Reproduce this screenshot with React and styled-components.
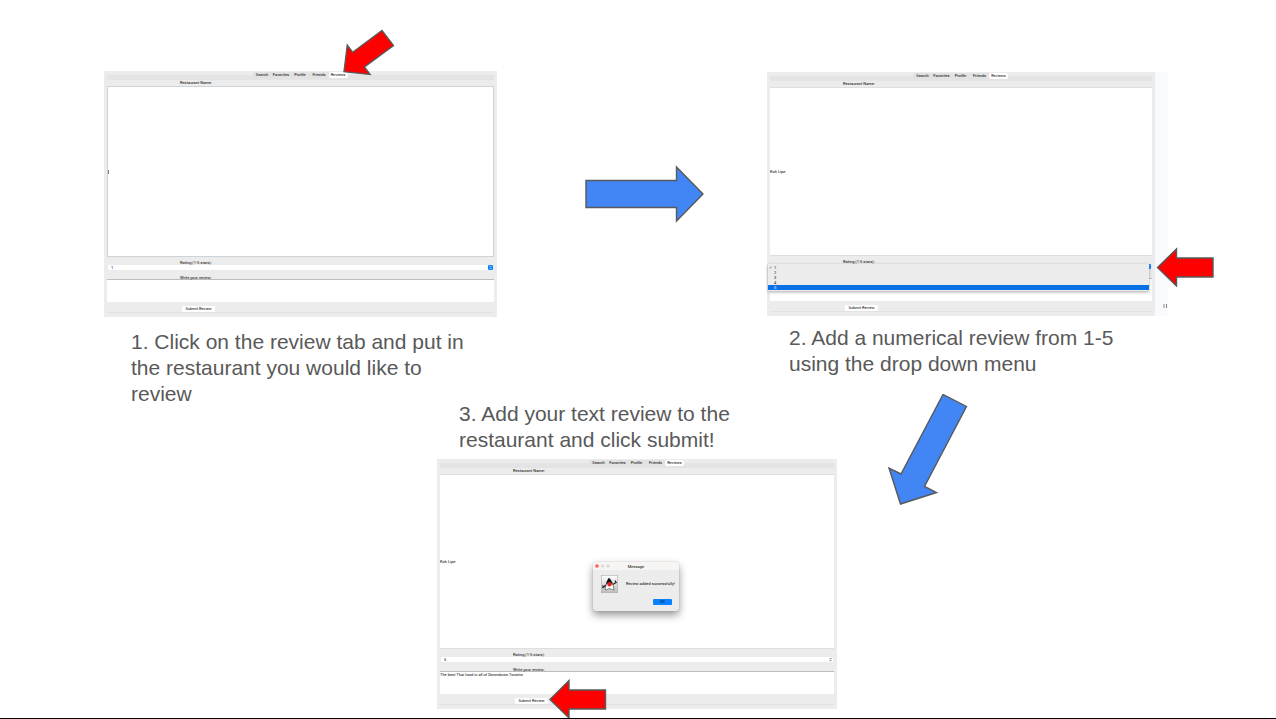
import React, { useId } from "react";
import styled, { createGlobalStyle } from "styled-components";

const GlobalStyle = createGlobalStyle`
  *, *::before, *::after { box-sizing: border-box; }
  body { margin: 0; background: #fff; font-family: "Liberation Sans", Arial, sans-serif; }
  button, input, select, textarea { font: inherit; color: inherit; margin: 0; padding: 0; border: 0; outline: 0; border-radius: 0; }
`;

const Slide = styled.main`
  display: grid;
  grid-template-columns: 104fr 333fr 60fr 270fr 70fr 331fr 108fr;
  grid-template-rows: auto auto;
  align-items: start;
  min-height: 100vh;
  padding: 71px 0 9px;
  border-bottom: 1px solid #000;
  overflow: hidden;
`;

const Step = styled.section`
  grid-column: ${(p) => p.$cols};
  grid-row: ${(p) => p.$rows};
  padding: ${(p) => p.$pad || "0"};
  min-width: 0;
`;

const Caption = styled.p`
  margin: ${(p) => p.$margin};
  max-width: 345px;
  font-size: 21px;
  line-height: 26px;
  color: #595959;
`;

const Shot = styled.div`
  position: relative;
  display: flex;
  background: #f9fafd;
  padding-right: ${(p) => p.$strip}px;
`;

const Window = styled.form`
  flex: 1;
  min-width: 0;
  padding: 0 3px 4px;
  background: #ececec;
  font-family: Roboto, "Liberation Sans", sans-serif;
  font-size: 4px;
  line-height: 5px;
  color: #000;
`;

const Header = styled.div`
  display: flex;
  justify-content: center;
  padding: 1px 1px 0 0;
  height: 9px;
  background: linear-gradient(#ececec 4px, #e4e4e4 4px);
`;

const TabGroup = styled.div`
  display: flex;
  height: 6px;
  border-radius: 2px;
  background: #e2e2e2;
`;

const Tab = styled.button`
  width: 19px;
  height: 6px;
  line-height: 6px;
  text-align: center;
  white-space: nowrap;
  border-radius: 2px;
  color: #000;
  background: ${(p) => (p.$active ? "#fff" : "transparent")};
`;

const Label = styled.label`
  display: block;
  height: ${(p) => p.$height}px;
  line-height: 6px;
  padding-top: ${(p) => p.$drop || 0}px;
  padding-left: 73px;
`;

const NameInput = styled.input`
  display: block;
  width: 100%;
  height: ${(p) => p.$height}px;
  border: solid ${(p) => (p.$caret ? "#ccd3d9" : "#dedede")};
  border-width: ${(p) => (p.$caret ? "1px" : "1px 0")};
  background: ${(p) =>
    p.$caret ? "linear-gradient(#777, #777) 0 50% / 1px 4px no-repeat #fff" : "#fff"};
`;

const SelectRow = styled.div`
  position: relative;
  display: flex;
  height: 5px;
  padding: 0 1px;
`;

const RatingSelect = styled.select`
  appearance: none;
  flex: 1;
  height: 5px;
  padding-left: 3px;
  line-height: 5px;
  border-radius: 1px;
  background: #fff;
`;

const Stepper = styled.svg`
  position: absolute;
  right: 1px;
  top: 0;
  width: 5px;
  height: 5px;
`;

const ReviewText = styled.textarea`
  display: block;
  width: 100%;
  height: 23px;
  resize: none;
  overflow: hidden;
  border-top: 1px solid #bdbdbd;
  background: #fff;
`;

const Footer = styled.div`
  height: 11px;
  padding: 4px 0 0 75px;
  border-bottom: 1px solid #e2e2e2;
`;

const SubmitButton = styled.button`
  display: block;
  width: 33px;
  height: 6px;
  line-height: 6px;
  border-radius: 1px;
  background: #fff;
  color: #000;
`;

const Menu = styled.ul`
  position: absolute;
  top: 192px;
  left: 1px;
  right: 19px;
  margin: 0;
  padding: 1px 0;
  list-style: none;
  font-family: Roboto, "Liberation Sans", sans-serif;
  font-size: 4px;
  background: #ececec;
  box-shadow: 0 1px 3px rgba(0, 0, 0, 0.35);
`;

const MenuItem = styled.li`
  display: flex;
  height: 5px;
  line-height: 5px;
  color: ${(p) => (p.$active ? "#fff" : "#111")};
  background: ${(p) => (p.$active ? "#0a70e8" : "transparent")};
`;

const Check = styled.span`
  width: 6px;
  padding-left: 1px;
`;

const PauseMark = styled.svg`
  position: absolute;
  right: 0;
  bottom: 8px;
  width: 5px;
  height: 4px;
`;

const Dialog = styled.div`
  position: absolute;
  left: 39%;
  top: 103px;
  width: 86px;
  height: 49px;
  border-radius: 3px;
  background: #ececec;
  box-shadow: 0 4px 9px rgba(0, 0, 0, 0.42), 0 0 1px rgba(0, 0, 0, 0.35);
  font-family: Roboto, "Liberation Sans", sans-serif;
  font-size: 4px;
  color: #000;
`;

const DialogTitle = styled.div`
  display: grid;
  grid-template-columns: 20px 1fr 20px;
  align-items: center;
  height: 8px;
  border-radius: 3px 3px 0 0;
  background: #f6f5f3;
  text-align: center;
`;

const DialogBody = styled.div`
  display: flex;
  gap: 8px;
  padding: 5px 0 0 8px;
  line-height: 18px;
  white-space: nowrap;

  svg { flex: none; }
`;

const OkButton = styled.button`
  display: block;
  width: 19px;
  height: 6px;
  margin: 6px 7px 0 auto;
  line-height: 6px;
  border-radius: 1px;
  background: #0a82ff;
  color: #06264d;
`;

const Arrow = styled.svg`
  display: block;
  fill: ${(p) => (p.$red ? "#f00" : "#4285f4")};
  stroke: #595959;
  stroke-width: 1.4;
`;

const Pointer = styled(Arrow)`
  position: absolute;
  z-index: 2;
  left: ${(p) => p.$left};
  top: ${(p) => p.$top};
`;

const Link = styled.div`
  grid-column: ${(p) => p.$cols};
  grid-row: ${(p) => p.$row};
  padding: ${(p) => p.$pad};
`;

const TABS = ["Search", "Favorites", "Profile", "Friends", "Reviews"];
const RATINGS = ["1", "2", "3", "4", "5"];

function ReviewWindow({ boxHeight, name = "", rating = "1", review = "", caret, blue }) {
  const id = useId();
  return (
    <Window onSubmit={(e) => e.preventDefault()}>
      <Header>
        <TabGroup role="tablist">
          {TABS.map((t) => (
            <Tab key={t} type="button" role="tab" aria-selected={t === "Reviews"} $active={t === "Reviews"}>
              {t}
            </Tab>
          ))}
        </TabGroup>
      </Header>
      <Label htmlFor={id + "n"} $height={6}>Restaurant Name:</Label>
      <NameInput id={id + "n"} defaultValue={name} $height={boxHeight} $caret={caret} />
      <Label htmlFor={id + "r"} $height={8} $drop={3}>Rating (1-5 stars):</Label>
      <SelectRow>
        <RatingSelect id={id + "r"} defaultValue={rating}>
          {RATINGS.map((r) => <option key={r}>{r}</option>)}
        </RatingSelect>
        <Stepper viewBox="0 0 5 5" aria-hidden="true">
          {blue && <rect width="5" height="5" rx="1" fill="#0a82ff" />}
          <path d="M1.5 2 2.5 1 3.5 2M1.5 3 2.5 4 3.5 3" fill="none" stroke={blue ? "#fff" : "#333"} strokeWidth=".6" />
        </Stepper>
      </SelectRow>
      <Label htmlFor={id + "t"} $height={9} $drop={5}>Write your review:</Label>
      <ReviewText id={id + "t"} defaultValue={review} />
      <Footer>
        <SubmitButton type="submit">Submit Review</SubmitButton>
      </Footer>
    </Window>
  );
}

function Duke() {
  return (
    <svg width="17" height="18" viewBox="0 0 17 18" aria-hidden="true">
      <defs>
        <linearGradient id="tile" x1="0" y1="0" x2="0" y2="1">
          <stop offset="0" stopColor="#fff" />
          <stop offset="1" stopColor="#bdbdbd" />
        </linearGradient>
      </defs>
      <rect x=".3" y=".3" width="16.4" height="17.4" fill="url(#tile)" stroke="#aaa" strokeWidth=".6" />
      <path d="M8 3C6.500 5 5 9 4 14.500C6 15.500 7 13.500 8.500 13.500S11 15.500 13 14.500C12 9 10.500 5 8 3Z" fill="#fff" stroke="#333" strokeWidth=".6" />
      <path d="M8 3C6.800 4.500 5.500 7 5.200 8.800L11.500 8.800C10.500 6 9.500 4.500 8 3Z" fill="#111" />
      <path d="M4.800 10 1.500 13M1.500 10.500 3 12.500M11.800 9.500 15 7.500M14 5.500 15.500 8" fill="none" stroke="#222" strokeWidth="1.200" />
      <circle cx="8.500" cy="9.300" r="2.200" fill="#e6231f" />
    </svg>
  );
}

export default function App() {
  return (
    <>
      <GlobalStyle />
      <Slide>
        <Step $cols="2 / 4" $rows="1 / 3">
          <Shot $strip={0}>
            <ReviewWindow boxHeight={171} caret blue />
            <Pointer $red $left="60.5%" $top="-42px" width="53" height="48" viewBox="343 29 53 48" aria-hidden="true">
              <path d="M345 71.700 348.300 45 353.700 52.300 383 30.500 394.500 45.500 365.500 67 371 74.500Z" />
            </Pointer>
          </Shot>
          <Caption $margin="12px 0 0 27px">1. Click on the review tab and put in the restaurant you would like to review</Caption>
        </Step>

        <Link $cols="4" $row="1" $pad="94px 0 0 87px">
          <Arrow width="120" height="58" viewBox="584 165 120 58" aria-hidden="true">
            <path d="M586 180.500H676.500V167L703 194 676.500 221V207.500H586Z" />
          </Arrow>
        </Link>

        <Step $cols="5 / 7" $rows="1" $pad="1px 0 17px">
          <Shot $strip={13}>
            <ReviewWindow boxHeight={169} name="Koh Lipe" blue />
            <Menu>
              {RATINGS.map((r) => (
                <MenuItem key={r} $active={r === "5"}>
                  <Check>{r === "1" ? "✓" : ""}</Check>
                  {r}
                </MenuItem>
              ))}
            </Menu>
            <PauseMark viewBox="0 0 5 4" aria-hidden="true">
              <path d="M1 0V4M3.500 0V4" stroke="#888" />
            </PauseMark>
            <Pointer $red $left="97%" $top="175px" width="59" height="40" viewBox="1156 247 59 40" aria-hidden="true">
              <path d="M1157.500 267.500 1176.500 249V258H1213V277H1176.500V286Z" />
            </Pointer>
          </Shot>
          <Caption $margin="9px 0 0 22px">2. Add a numerical review from 1-5 using the drop down menu</Caption>
        </Step>

        <Step $cols="3 / 6" $rows="2" $pad="7px 0 0">
          <Caption $margin="0 0 6px 22px">3. Add your text review to the restaurant and click submit!</Caption>
          <Shot $strip={0}>
            <ReviewWindow
              boxHeight={175}
              name="Koh Lipe"
              rating="5"
              review="The best Thai food in all of Downdown Toronto"
            />
            <Dialog role="dialog" aria-label="Message">
              <DialogTitle>
                <svg width="20" height="8" viewBox="0 0 20 8" aria-hidden="true">
                  <circle cx="4" cy="4" r="1.800" fill="#ff5f57" />
                  <circle cx="9.500" cy="4" r="1.700" fill="#dcdcdc" />
                  <circle cx="15" cy="4" r="1.700" fill="#dcdcdc" />
                </svg>
                Message
              </DialogTitle>
              <DialogBody>
                <Duke />
                Review added successfully!
              </DialogBody>
              <OkButton type="button">OK</OkButton>
            </Dialog>
            <Pointer $red $left="28%" $top="220px" width="59" height="40" viewBox="549 679 59 40" aria-hidden="true">
              <path d="M550 699.500 569 680.500V690H605.500V709H569V718Z" />
            </Pointer>
          </Shot>
        </Step>

        <Link $cols="6" $row="2" $pad="0 0 0 50px">
          <Arrow width="81" height="112" viewBox="887 394 81 112" aria-hidden="true">
            <path d="M943 394.500 966.500 406.500 924.500 486.500 936.500 492.500 900.500 504 889 468 901 474Z" />
          </Arrow>
        </Link>
      </Slide>
    </>
  );
}
